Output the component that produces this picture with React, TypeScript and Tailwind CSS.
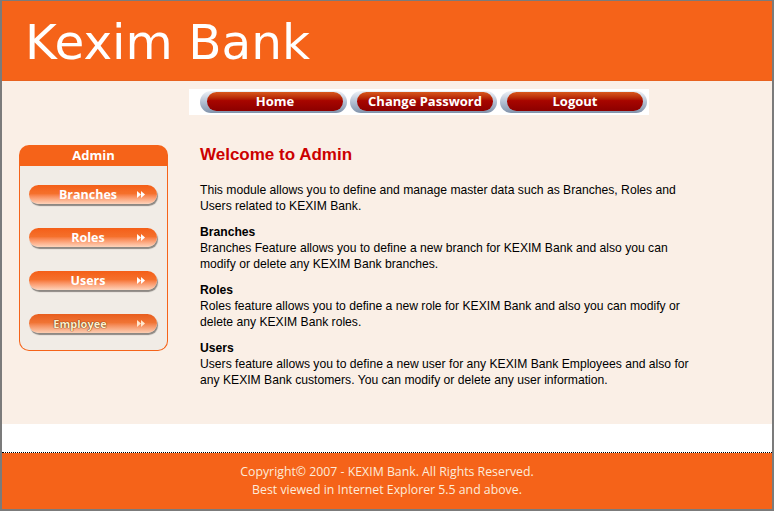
import React from "react";

const navItems = ["Home", "Change Password", "Logout"];
const sideItems = ["Branches", "Roles", "Users"];

const sections = [
  {
    title: "Branches",
    text: "Branches Feature allows you to define a new branch for KEXIM Bank and also you can modify or delete any KEXIM Bank branches.",
  },
  {
    title: "Roles",
    text: "Roles feature allows you to define a new role for KEXIM Bank and also you can modify or delete any KEXIM Bank roles.",
  },
  {
    title: "Users",
    text: "Users feature allows you to define a new user for any KEXIM Bank Employees and also for any KEXIM Bank customers. You can modify or delete any user information.",
  },
];

function Arrows({ className }: { className: string }) {
  return (
    <svg width="8" height="7" viewBox="0 0 8 7" className={className}>
      <polygon points="0,0 4,3.5 0,7" />
      <polygon points="4,0 8,3.5 4,7" />
    </svg>
  );
}

export default function App() {
  return (
    <div className="w-[774px] h-[511px] bg-white flex flex-col border-t border-x-2 border-b-2 border-[#7b7b7b]">
      {/* Header */}
      <div className="h-[80px] shrink-0 bg-[#f56319] border-b border-[#e8621f] pl-[23px] pt-[17px]">
        <h1 className="text-[48.5px] leading-none text-white font-['DejaVu_Sans',sans-serif]">Kexim Bank</h1>
      </div>

      {/* Body */}
      <div className="h-[343px] shrink-0 bg-[#faefe6]">
        {/* Top nav */}
        <div className="ml-[187px] mt-[8px] w-[460px] h-[26px] bg-white flex pl-[11px] pt-[2px] gap-[3px]">
          {navItems.map((item) => (
            <div
              key={item}
              className="w-[147px] h-[22px] rounded-full bg-linear-to-b from-[#eef2f7] via-[#b3c0d2] to-[#8193ab] pl-[7px] pr-[4px] pt-[1px]"
            >
              <div className="h-[19px] rounded-full bg-linear-to-b from-[#d9581c] via-[#a80600] via-45% to-[#8c0000] flex items-center justify-center text-white text-[13px] font-bold font-['Open_Sans',sans-serif] leading-none">
                {item}
              </div>
            </div>
          ))}
        </div>

        <div className="flex mt-[30px]">
          {/* Sidebar */}
          <div className="ml-[17px] w-[149px] shrink-0">
            <div className="h-[21px] rounded-t-[10px] bg-[#f56319] text-white text-center text-[13px] font-bold leading-[21px] font-['Open_Sans',sans-serif]">
              Admin
            </div>
            <div className="bg-[#f1ece6] border-x border-b border-[#f56319] rounded-b-[10px] pt-[19px] pb-[17px] pl-[9px] flex flex-col gap-[24px]">
              {sideItems.map((item) => (
                <div
                  key={item}
                  className="relative w-[128px] h-[19px] rounded-full bg-linear-to-b from-[#f45e16] via-[#f5702b] via-45% to-[#fdd3bb] shadow-[1px_2px_1px_#8d8883] pr-[10px] text-center text-white text-[12.5px] font-bold leading-[19px] font-['Open_Sans',sans-serif]"
                >
                  {item}
                  <Arrows className="absolute right-[12px] top-[6px] fill-white" />
                </div>
              ))}
              <div className="relative w-[128px] h-[19px] rounded-full bg-linear-to-b from-[#e85d1d] via-[#f07434] via-45% to-[#fbcdb2] shadow-[1px_2px_1px_#8d8883] pr-[26px] text-center text-[#fff0cc] text-[11px] font-bold leading-[19px] font-['Open_Sans',sans-serif] [text-shadow:0_0_1px_#5a2200,0_0_1px_#5a2200]">
                Employee
                <Arrows className="absolute right-[12px] top-[6px] fill-[#ffe8d0]" />
              </div>
            </div>
          </div>

          {/* Content */}
          <div className="ml-[32px] w-[505px] font-['Liberation_Sans',Arial,sans-serif] text-[12.15px] leading-[16px] text-black">
            <h2 className="text-[17px] leading-[20px] font-bold text-[#cc0000]">Welcome to Admin</h2>
            <p className="mt-[17px]">
              This module allows you to define and manage master data such as Branches, Roles and Users related to KEXIM Bank.
            </p>
            {sections.map((s) => (
              <div key={s.title} className="mt-[10px]">
                <div className="font-bold">{s.title}</div>
                <p>{s.text}</p>
              </div>
            ))}
          </div>
        </div>
      </div>

      {/* White gap with dotted line */}
      <div className="h-[29px] shrink-0 bg-white border-b border-dotted border-black" />

      {/* Footer */}
      <div className="flex-1 bg-[#f56319] pt-[10px] text-center text-[#fdebd9] text-[12.3px] leading-[18px] font-['Open_Sans',sans-serif]">
        <div>Copyright© 2007 - KEXIM Bank. All Rights Reserved.</div>
        <div>Best viewed in Internet Explorer 5.5 and above.</div>
      </div>
    </div>
  );
}
